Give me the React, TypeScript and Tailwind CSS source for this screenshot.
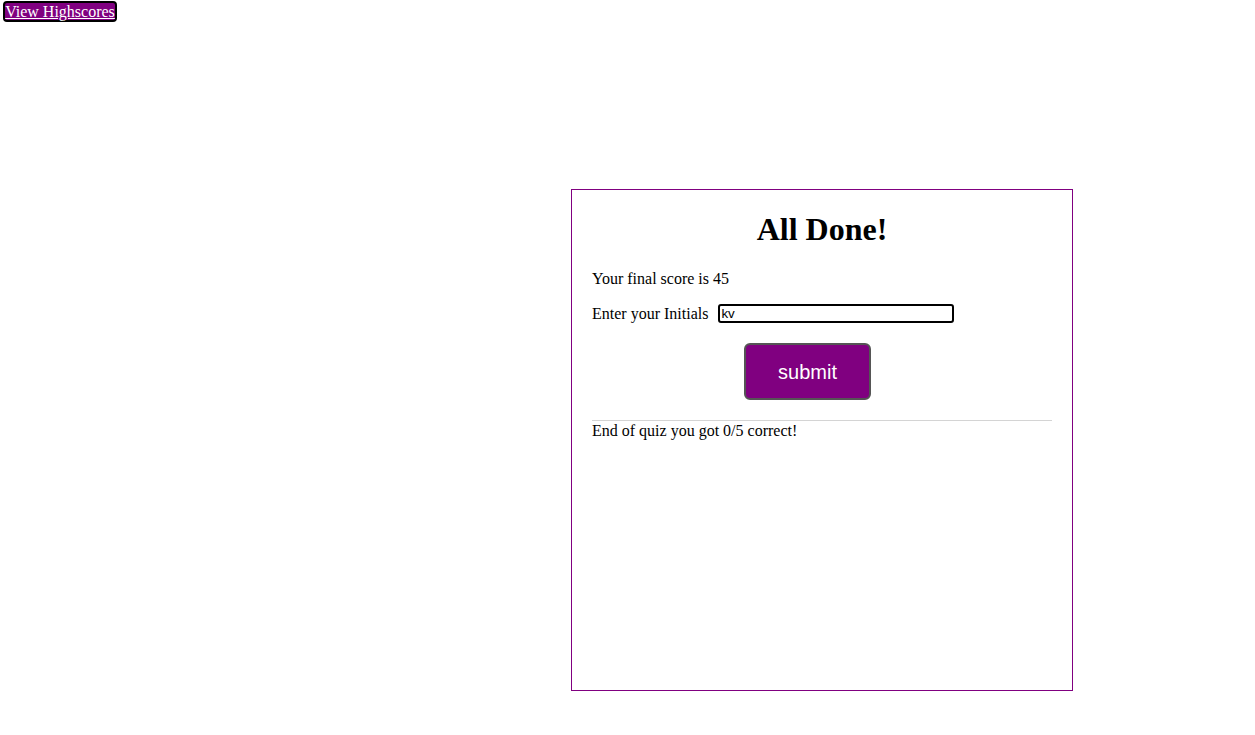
import React from 'react';

export default function App() {
  return (
    <div className="min-h-screen bg-white text-black font-['Liberation_Serif',serif] text-[16px]">
      <div className="flex pt-[1px] pl-[3px]">
        <button className="h-[21px] w-[114px] px-0 bg-[#800080] border-2 border-black rounded-[4px] text-white underline leading-[17px] font-['Liberation_Serif',serif] text-[16px]">
          View Highscores
        </button>
      </div>

      <div className="ml-[571px] mt-[167px] w-[502px] h-[502px] border border-[#800080] px-[20px] pt-[21px]">
        <h1 className="text-center text-[32px] font-bold leading-[37px]">All Done!</h1>

        <p className="mt-[22px] leading-[18px]">Your final score is 45</p>

        <div className="mt-[16px] flex items-center">
          <label className="leading-[18px]">Enter your Initials</label>
          <input
            defaultValue="kv"
            className="ml-[10px] w-[236px] h-[19px] border-2 border-black rounded-[3px] px-[1px] text-[13.33px] leading-[15px] font-['Liberation_Sans',sans-serif] text-black outline-none"
          />
        </div>

        <button className="mt-[20px] ml-[152px] w-[127px] h-[57px] bg-[#800080] border-2 border-[#555] rounded-[6px] text-white text-[20px] font-['Liberation_Sans',sans-serif]">
          submit
        </button>

        <hr className="mt-[20px] border-t border-[#d4d4d4]" />
        <p className="leading-[18px] mt-[1px]">End of quiz you got 0/5 correct!</p>
      </div>
    </div>
  );
}
